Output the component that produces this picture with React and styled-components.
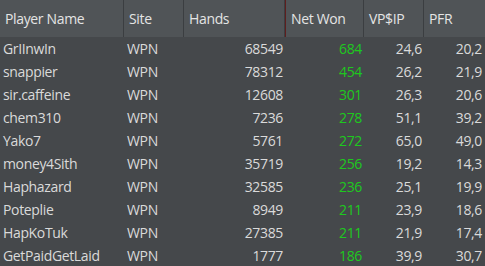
import React from "react";
import styled, { createGlobalStyle } from "styled-components";

const Global = createGlobalStyle`
  html, body { margin: 0; padding: 0; background: #45484b; }
  body { font-family: "Open Sans", "Noto Sans", sans-serif; }
`;

const cols = [
  { key: "name", label: "Player Name", w: 124, align: "left" },
  { key: "site", label: "Site", w: 60, align: "left" },
  { key: "hands", label: "Hands", w: 101, align: "right" },
  { key: "net", label: "Net Won", w: 79, align: "right", green: true, sorted: true },
  { key: "vpip", label: "VP$IP", w: 60, align: "right" },
  { key: "pfr", label: "PFR", w: 60, align: "right" },
];

const rows = [
  ["GrIInwIn", "WPN", "68549", "684", "24,6", "20,2"],
  ["snappier", "WPN", "78312", "454", "26,2", "21,9"],
  ["sir.caffeine", "WPN", "12608", "301", "26,3", "20,6"],
  ["chem310", "WPN", "7236", "278", "51,1", "39,2"],
  ["Yako7", "WPN", "5761", "272", "65,0", "49,0"],
  ["money4Sith", "WPN", "35719", "256", "19,2", "14,3"],
  ["Haphazard", "WPN", "32585", "236", "25,1", "19,9"],
  ["Poteplie", "WPN", "8949", "211", "23,9", "18,6"],
  ["HapKoTuk", "WPN", "27385", "211", "21,9", "17,4"],
  ["GetPaidGetLaid", "WPN", "1777", "186", "39,9", "30,7"],
];

const Table = styled.div`
  width: 485px;
  height: 266px;
  overflow: hidden;
  background: #45484b;
  font-size: 14px;
  letter-spacing: -0.35px;
`;

const HeaderRow = styled.div`
  display: flex;
  height: 37px;
  background: #505457;
`;

const HeaderCell = styled.div`
  box-sizing: border-box;
  width: ${(p) => p.$w}px;
  flex: none;
  display: flex;
  align-items: center;
  padding-left: 5px;
  color: #e4e4e4;
  border-right: 1px solid ${(p) => (p.$last ? "transparent" : "#3b3e41")};
  border-left: ${(p) => (p.$sorted ? "1px solid #5e1e1e" : "none")};
`;

const Row = styled.div`
  display: flex;
  height: 23px;
`;

const Cell = styled.div`
  box-sizing: border-box;
  width: ${(p) => p.$w}px;
  flex: none;
  display: flex;
  align-items: center;
  justify-content: ${(p) => (p.$align === "right" ? "flex-end" : "flex-start")};
  padding: ${(p) => (p.$align === "right" ? "0 2px 0 0" : "0 0 0 3px")};
  color: ${(p) => (p.$green ? "#1ec81e" : "#dadada")};
  white-space: nowrap;
`;

export default function App() {
  return (
    <>
      <Global />
      <Table>
        <HeaderRow>
          {cols.map((c, i) => (
            <HeaderCell key={c.key} $w={c.w} $sorted={c.sorted} $last={i === cols.length - 1}>
              {c.label}
            </HeaderCell>
          ))}
        </HeaderRow>
        {rows.map((r, ri) => (
          <Row key={ri}>
            {r.map((v, ci) => (
              <Cell key={ci} $w={cols[ci].w} $align={cols[ci].align} $green={cols[ci].green}>
                {v}
              </Cell>
            ))}
          </Row>
        ))}
      </Table>
    </>
  );
}
